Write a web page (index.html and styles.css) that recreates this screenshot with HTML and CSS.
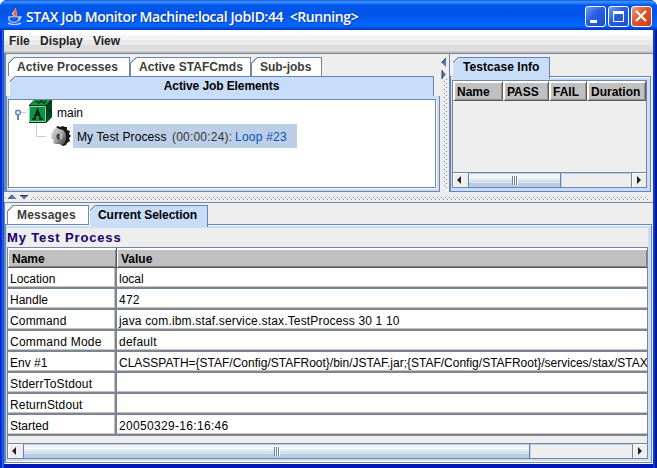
FILE: index.html
```html
<!DOCTYPE html>
<html lang="en">
<head>
<meta charset="utf-8">
<title>STAX Job Monitor</title>
<link rel="stylesheet" href="styles.css">
</head>
<body>
<div class="window">
  <header class="titlebar">
    <svg class="java" width="16" height="17" viewBox="0 0 16 17" fill="none"><path d="M8 0c2 2-3 4-1 6l1 2M10 3c-3 2 1 3-1 5" stroke="#ff7950" stroke-width="1.7"/><path d="M7 4c-3 1-1 3 0 4" stroke="#fff" /><path d="M2 9h10v3l-3 2H5l-3-2zM12 9h2l-1 2-2 1M1 15c4 2 9 2 13 0" stroke="#becbea" stroke-width="1.4"/><path d="M3 10h8M4 13h6" stroke="#304eaa"/></svg>
    <h1 class="caption">STAX Job Monitor Machine:local JobID:44&nbsp; &lt;Running&gt;</h1>
    <div class="controls">
      <span class="ctl"><svg width="21" height="21"><path d="M5 14h7v3H5z" fill="#fff"/></svg></span>
      <span class="ctl"><svg width="21" height="21"><path d="M5.500 5.500h10v10h-10z" fill="none" stroke="#fff"/><path d="M5 5h11v3H5z" fill="#fff"/></svg></span>
      <span class="ctl close"><svg width="21" height="21"><path d="M5 5l10 10M15 5L5 15" stroke="#fff" stroke-width="2.200"/></svg></span>
    </div>
  </header>
  <nav class="menu"><span class="m-file">File</span><span class="m-display">Display</span><span class="m-view">View</span></nav>
  <main class="content">
    <div class="top">
      <section class="jobs">
        <div class="tabs jobs-tabs"><span class="tab t-proc">Active Processes</span><span class="tab t-cmds">Active STAFCmds</span><span class="tab t-sub">Sub-jobs</span></div>
        <div class="tab selected t-elements"><b>Active Job Elements</b></div>
        <div class="jobs-body">
          <div class="tree">
            <div class="node root">
              <svg class="knob" width="13" height="12" fill="none"><circle cx="4" cy="3.500" r="2.300" stroke="#6382bf" stroke-width="1.500"/><path d="M4 6v5" stroke="#6382bf" stroke-width="2"/><path d="M7 3.500h5" stroke="#b8cfe5"/></svg>
              <svg class="cube" width="24" height="24"><path d="M0 5l5-5h18v17l-6 6H0z" fill="#102c18"/><path d="M1 5l4-5h17l-5 5z" fill="#149447"/><path d="M18 7l5-5v15l-5 5z" fill="#064d25"/><path d="M.5 6.500h16v15H.5z" fill="#109245" stroke="#7eddad"/><path d="M7 1l3 2 2-2 3 2 2-2M20 8v4l2-2v6" stroke="#003417" stroke-width="1.500" fill="none"/><path d="M3 19h4m3 0h4M5.500 18l3-8 3 8M7 15h4" stroke="#06180d" stroke-width="1.700" fill="none"/></svg>
              <span class="t-main">main</span>
            </div>
            <div class="node child">
              <svg class="elbow" width="10" height="14" fill="none"><path d="M.5 0v12.500H10" stroke="#b8cfe5"/></svg>
              <svg class="gear" width="20" height="20" viewBox="0 0 20 20"><defs><linearGradient id="metal" x2="1" y2="1"><stop stop-color="#e1e1e1"/><stop offset=".5" stop-color="#aaa"/><stop offset="1" stop-color="#333"/></linearGradient></defs><path d="M5 1l2-1 2 1 3-1 2 1 2 0 0 3 3 1-1 3 2 2-2 2 1 3-3 2-1 2-3 1-2-1z" fill="#171717"/><path d="M2 3l2 0 1-2 3 2c5 0 7 4 7 8s-1 7-4 8l-3-1-3 0-3-1 1-3-3-2 1-2-1-2 2-2z" fill="url(#metal)"/><path d="M8 8c-3 1-2 5 0 5m0-5v5" stroke="#303030" stroke-width="1.300" fill="none"/><path d="M10 8v5" stroke="#eee"/></svg>
              <span class="selection"><span class="t-name">My Test Process</span><span class="t-time">(00:00:24):</span><span class="t-loop">Loop #23</span></span>
            </div>
          </div>
        </div>
      </section>
      <div class="vsplit"><svg width="10" height="139"><defs><pattern id="vd" width="4" height="4" patternUnits="userSpaceOnUse"><path d="M0 0h1v1H0zM2 2h1v1H2z" fill="#7286a3"/><path d="M1 1h1v1H1zM3 3h1v1H3z" fill="#fff"/></pattern></defs><g transform="translate(4 3)"><path d="M0 0h4v132H0z" fill="url(#vd)"/></g><path d="M2 3h5v22H2z" fill="#eee"/><path d="M6 4v9L1.500 8.500zM2 16v9l4-4.500z" fill="#5576b2"/><path d="M6 4L1.500 8.500M2 16v9" stroke="#303844"/></svg></div>
      <section class="info">
        <div class="tabs"><span class="tab selected t-info"><b>Testcase Info</b></span></div>
        <div class="info-body">
          <div class="info-table">
            <div class="info-head"><span class="h1c">Name</span><span class="h2c">PASS</span><span class="h3c">FAIL</span><span class="h4c">Duration</span></div>
            <div class="blank"></div>
            <div class="scroll"><svg class="arrow" width="15" height="14"><path d="M8 3v8L4 7z" fill="#222"/></svg><div class="thumb small"><i></i></div><div class="track"></div><svg class="arrow right" width="15" height="14"><path d="M5 3v8l4-4z" fill="#222"/></svg></div>
          </div>
        </div>
      </section>
    </div>
    <div class="hsplit"><svg width="649" height="10"><defs><pattern id="hd" width="4" height="4" patternUnits="userSpaceOnUse"><path d="M0 0h1v1H0zM2 2h1v1H2z" fill="#7286a3"/><path d="M1 1h1v1H1zM3 3h1v1H3z" fill="#fff"/></pattern></defs><g transform="translate(1 5)"><path d="M0 0h643v3H0z" fill="url(#hd)"/></g><path d="M3 2h23v6H3z" fill="#eee"/><path d="M3.500 7h9L8 2.500zM15.500 3h9L20 7.500z" fill="#5576b2"/><path d="M4 7l4-4M16 3.500h8" stroke="#303844"/></svg></div>
    <section class="details">
      <div class="tabs"><span class="tab t-msg">Messages</span><span class="tab selected t-cur"><b>Current Selection</b></span></div>
      <div class="details-body">
        <h2><span>My Test Process</span></h2>
        <div class="table">
          <div class="row head"><div><span class="l1">Name</span></div><div><span class="r1">Value</span></div></div>
          <div class="row"><div><span class="l2">Location</span></div><div><span class="r2">local</span></div></div>
          <div class="row"><div><span class="l3">Handle</span></div><div><span class="r3">472</span></div></div>
          <div class="row"><div><span class="l4">Command</span></div><div><span class="r4">java com.ibm.staf.service.stax.TestProcess 30 1 10</span></div></div>
          <div class="row"><div><span class="l5">Command Mode</span></div><div><span class="r5">default</span></div></div>
          <div class="row"><div><span class="l6">Env #1</span></div><div><span class="r6">CLASSPATH={STAF/Config/STAFRoot}/bin/JSTAF.jar;{STAF/Config/STAFRoot}/services/stax/STAX</span></div></div>
          <div class="row"><div><span class="l7">StderrToStdout</span></div><div></div></div>
          <div class="row"><div><span class="l8">ReturnStdout</span></div><div></div></div>
          <div class="row"><div><span class="l9">Started</span></div><div><span class="r9">20050329-16:16:46</span></div></div>
          <div class="blank"></div>
          <div class="scroll"><svg class="arrow" width="15" height="14"><path d="M8 3v8L4 7z" fill="#222"/></svg><div class="thumb large"><i></i></div><div class="track"></div><svg class="arrow right" width="15" height="14"><path d="M5 3v8l4-4z" fill="#222"/></svg></div>
        </div>
      </div>
    </section>
  </main>
</div>
</body>
</html>
```
FILE: styles.css
```css
* { box-sizing: border-box; }
body { margin: 0; background: #fff; font: 12px/14px "Liberation Sans", sans-serif; color: #000; overflow: hidden; }
svg { display: block; flex: none; }
span { white-space: nowrap; }
.window { width: 657px; height: 468px; display: flex; flex-direction: column; border-radius: 7px 7px 0 0; overflow: hidden; background: linear-gradient(90deg, #0022cf 0 1px, #0831d9 1px 2px, #166aee 2px 3px, #0855dd 3px 4px, transparent 4px 653px, #003de4 653px 655px, #001590 655px), #0019b5; }
.titlebar { height: 30px; flex: none; display: flex; align-items: center; padding: 3px 6px 0 6px; background: linear-gradient(#0831bb 0, #3a91ff 1px, #2582ff 3px, #0057ea 5px, #0054e5 14px, #0060fa 21px, #0067ff 26px, #003fd0 29px, #003bb8 30px); }
.java { margin: 0 3px 0 1px; }
.caption { margin: 0; flex: 1; font: 600 14px/20px "Open Sans", sans-serif; letter-spacing: -.4px; color: #fff; text-shadow: 1px 1px #133a9d; white-space: nowrap; }
.controls { display: flex; gap: 2px; margin-right: -1px; }
.ctl { width: 21px; height: 21px; border: 1px solid #fff; border-radius: 3px; background: linear-gradient(135deg, #6c9cff, #295de0 45%, #1c4dcc); }
.ctl svg { margin: -1px; }
.close { background: linear-gradient(135deg, #f29d83, #e0542c 45%, #cb3c16); }
.menu { height: 23px; flex: none; margin: 0 4px; display: flex; padding: 4px 5px; font-weight: bold; color: #222; background: linear-gradient(#fff 0 5px, #f5f5f5 5px 10px, #e9e9e9 10px 15px, #ddd 15px 21px, #bbb 22px); }
.m-file { width: 31px; } .m-display { width: 53px; }
.content { height: 411px; margin: 0 4px; display: flex; flex-direction: column; background: #eee; }
.top { height: 139px; display: flex; flex: none; border-top: 1px solid #7a8a99; }
.jobs { width: 436px; flex: none; border-left: 2px solid #7085a8; padding-top: 3px; display: flex; flex-direction: column; }
.tabs { display: flex; height: 19px; flex: none; }
.tab { height: 19px; border: 1px solid #7286a3; border-bottom: 0; padding: 2px 0 0 9px; font-weight: bold; color: #3b3b3b; background: linear-gradient(135deg, #6382bf 0 5px, #fff 5px) border-box; clip-path: polygon(6px 0, 100% 0, 100% 100%, 0 100%, 0 6px); }
.tab.selected { color: #000; background: linear-gradient(135deg, #6382bf 0 5px, #fff 5px 6px, #c8ddf8 6px) border-box; height: 22px; border-color: #6382bf #6382bf #6382bf #fff; position: relative; z-index: 1; }
.jobs-tabs { padding-left: 2px; }
.t-proc { width: 122px; padding-left: 8px; letter-spacing: .1px; } .t-cmds { width: 121px; padding-left: 8px; letter-spacing: .05px; } .t-sub { width: 71px; padding-left: 8px; }
.tab.t-elements { width: 425px; margin-left: 3px; height: 20px; padding: 2px 0 0; text-align: center; letter-spacing: -.1px; flex: none; }
.jobs-body { flex: 1; border: 1px solid #7286a3; border-top: 0; padding: 3px; padding-left: 1px; background: #c8ddf8; }
.tree { height: 100%; border: 1px solid #7286a3; background: #fff; box-shadow: 1px 1px #fff; }
.node { display: flex; }
.root { height: 24px; padding-left: 5px; }
.knob { margin-top: 9px; } .cube { margin-left: 2px; } .root span { margin: 6px 0 0 4px; }
.child { height: 24px; padding-left: 27px; }
.gear { margin: 2px 0 0 5px; }
.selection { display: flex; height: 24px; width: 224px; padding: 6px 0 0 4px; margin-left: 2px; background: #bdcfe7; }
.t-name { width: 95px; letter-spacing: .12px; } .t-time { width: 63px; color: #333; letter-spacing: .2px; } .t-loop { color: #0055b8; letter-spacing: .22px; }
.vsplit { width: 9px; flex: none; overflow: hidden; }
.info { width: 200px; border-left: 1px solid #7286a3; display: flex; flex-direction: column; padding-top: 3px; }
.info .tabs { padding-left: 2px; }
.t-info { width: 98px; letter-spacing: .05px; }
.tab.t-info { padding-left: 10px; }
.info-body { flex: 1; width: 201px; border: 1px solid #6382bf; border-left-color: #7286a3; border-right-color: #7286a3; background: #c8ddf8; padding: 3px 3px 3px 1px; box-shadow: inset 0 1px #fff; }
.info-table { height: 100%; border: 1px solid #7286a3; background: #eee; display: flex; flex-direction: column; }
.info-head { display: flex; height: 20px; font-weight: bold; }
.info-head span { border: 1px solid; border-color: #fff #5c5c5c #5c5c5c #fff; box-shadow: inset 1px 1px #fff, inset -1px -1px #929292; background: #c0c0c0; padding: 3px 0 0 3px; }
.h1c { width: 50px; } .h2c { width: 46px; } .h3c { width: 38px; } .h4c { flex: 1; }
.blank { flex: 1; background: #eee; }
.scroll { height: 15px; flex: none; display: flex; border-top: 1px solid #7286a3; background: #eee; }
.arrow { box-shadow: inset 1px 1px #fff; }
.thumb { border: 1px solid #6382bf; border-width: 0 1px; background: linear-gradient(#b8cfe5 0 1px, #f2f2f2 1px 4px, #fff 4px 5px, #e4edf2 5px 7px, #d2e2ef 7px 10px, #b8cce4 10px); display: flex; justify-content: center; padding-top: 3px; }
.thumb i { width: 6px; height: 9px; background: repeating-linear-gradient(90deg, #6382bf 0 1px, #fff 1px 2px); }
.small { width: 93px; } .large { width: 507px; }
.track { flex: 1; box-shadow: inset 1px 1px #b8cfe5; }
.right { border-left: 1px solid #7286a3; }
.hsplit { height: 10px; flex: none; }
.details { flex: 1; border-top: 1px solid #7286a3; border-left: 1px solid #7286a3; border-bottom: 1px solid #fff; padding-top: 2px; display: flex; flex-direction: column; }
.details > .tabs { padding-left: 2px; }
.t-msg { width: 82px; letter-spacing: .17px; } .t-cur { width: 119px; letter-spacing: -.06px; }
.tab.t-cur { padding-left: 8px; }
.details-body { flex: 1; width: 647px; border: 1px solid #7286a3; border-top-color: #6382bf; box-shadow: inset 0 1px #fff, inset 0 -1px #fff; padding: 2px 3px 3px 2px; background: #c8ddf8; display: flex; flex-direction: column; min-height: 0; }
h2 { margin: 0 0 0 -1px; height: 20px; font: bold 13px/20px "Liberation Sans", sans-serif; color: #160070; letter-spacing: .86px; background: #eee; border-top: 1px solid #c8ddf8; }
.table { flex: 1; border: 1px solid #7286a3; margin-left: -1px; display: flex; flex-direction: column; overflow: hidden; background: #eee; }
.row { display: grid; grid-template-columns: 109px 1fr; height: 21px; flex: none; }
.row > div { overflow: hidden; background: #fff; border-right: 1px solid #7286a3; border-bottom: 1px solid #7286a3; box-shadow: inset -1px -1px #858585, inset -2px -2px #c5c1bb; padding: 4px 2px; }
.row > div:last-child { border-right: 0; box-shadow: inset 0 -1px #858585, inset 0 -2px #c5c1bb; }
.row.head { height: 20px; font-weight: bold; }
.row.head > div { background: #c0c0c0; border-color: #555; box-shadow: inset 1px 2px #fff, inset -1px -1px #858585; padding: 4px; }
.l4, .r4 { letter-spacing: .17px; }
.l5, .r5, .r3 { letter-spacing: .25px; }
.l7, .l8 { letter-spacing: .15px; }
.r9 { letter-spacing: .32px; }
```
